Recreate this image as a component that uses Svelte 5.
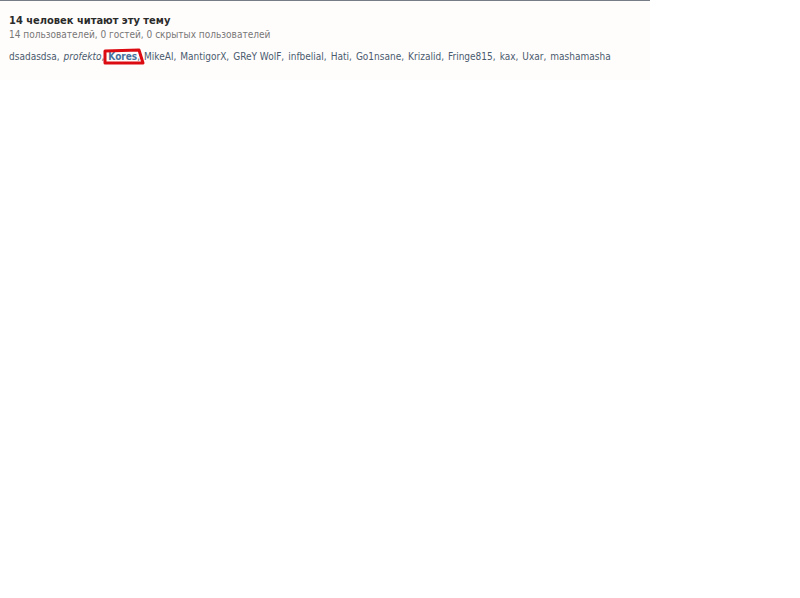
<script>
	const readers = [
		{ name: 'dsadasdsa' },
		{ name: 'profekto', italic: true },
		{ name: 'Kores', marked: true },
		{ name: 'MikeAl' },
		{ name: 'MantigorX' },
		{ name: 'GReY WolF' },
		{ name: 'infbelial' },
		{ name: 'Hati' },
		{ name: 'Go1nsane' },
		{ name: 'Krizalid' },
		{ name: 'Fringe815' },
		{ name: 'kax' },
		{ name: 'Uxar' },
		{ name: 'mashamasha' }
	];
</script>

<section class="active-users">
	<h4>14 человек читают эту тему</h4>
	<p class="desc">14 пользователей, 0 гостей, 0 скрытых пользователей</p>
	<ul>
		{#each readers as reader, i}
			<li class:marked={reader.marked}>
				<a href="#user" class:italic={reader.italic}>{reader.name}</a>{#if i < readers.length - 1},{/if}
				{#if reader.marked}
					<svg viewBox="0 0 42 18" width="42" height="18" aria-hidden="true">
						<path d="M2 3 L36 2 L40 15 L2 15 Z" />
					</svg>
				{/if}
			</li>
		{/each}
	</ul>
</section>

<style>
	:global(body) {
		background: #fff;
	}
	.active-users {
		max-width: 632px;
		padding: 13px 9px 16px;
		border-top: 1px solid #767d86;
		background: #fffdfc;
		font: 10px/14px 'DejaVu Sans Condensed', 'DejaVu Sans', sans-serif;
		color: #4a5b6e;
	}
	h4 {
		margin: 0;
		font-size: 11px;
		color: #2b2b2b;
	}
	.desc {
		margin: 0 0 8px;
		color: #777;
	}
	ul {
		display: flex;
		flex-wrap: wrap;
		gap: 0 4px;
		margin: 0;
		padding: 0;
		list-style: none;
	}
	a {
		color: inherit;
		text-decoration: none;
	}
	.italic {
		font-style: italic;
	}
	.marked {
		position: relative;
	}
	.marked a {
		font-weight: bold;
		color: #47709c;
	}
	svg {
		position: absolute;
		top: -2px;
		left: -5px;
		fill: none;
		stroke: #dc0b12;
		stroke-width: 3;
		stroke-linejoin: round;
	}
</style>
